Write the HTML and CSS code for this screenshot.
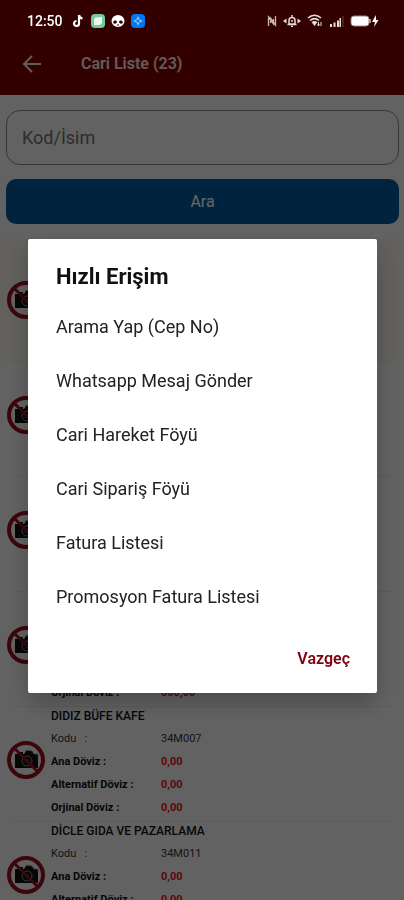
FILE: index.html
```html
<!DOCTYPE html>
<html lang="tr">
<head>
<meta charset="UTF-8">
<meta name="viewport" content="width=device-width, initial-scale=1">
<title>Cari Liste</title>
<link rel="stylesheet" href="styles.css">
</head>
<body>
    <svg class="symbols" aria-hidden="true">
        <symbol id="no-photo" viewBox="0 0 40 40">
            <path d="M9 14h5v-2h3v2h1l2-3h6l2 3h4v14H9z" fill="#111"/>
            <circle cx="21" cy="21" r="5" fill="none" stroke="#888" stroke-width="1"/>
            <circle cx="21" cy="21" r="2" fill="#555"/>
            <path d="M19 11l3-1 4 1 2 3h4v3" fill="none" stroke="#999" stroke-width="1"/>
            <path d="M8 8l24 24" stroke="#8c1020" stroke-width="3"/>
            <circle cx="20" cy="20" r="17" fill="none" stroke="#960f1c" stroke-width="4"/>
        </symbol>
    </svg>

    <div class="status-bar">
        <span class="clock">12:50</span>
        <div class="status-apps">
            <svg width="14" height="14" viewBox="0 0 14 14"><path d="M8 1v8.500a2.500 2.500 0 1 1-2.500-2.500M8 1c.3 2 1.500 3.200 3.500 3.400" fill="none" stroke="#fff" stroke-width="2.200"/></svg>
            <svg width="14" height="14" viewBox="0 0 14 14"><rect width="14" height="14" rx="4" fill="#76c9a0"/><path d="M3 5l1.500-1.500L11 3v6L9 11H3z" fill="#e8f8ee"/></svg>
            <svg width="14" height="14" viewBox="0 0 14 14"><ellipse cx="7" cy="7" rx="6.500" ry="6" fill="#fff"/><path d="M2.200 8c0-1.500 3-2.200 3.600-1 .5 1.500-.6 2.700-2 2.700C2.800 9.700 2.200 9 2.200 8zM11.800 8c0-1.500-3-2.200-3.600-1-.5 1.500.6 2.700 2 2.700 1 0 1.600-.7 1.600-1.700z" fill="#300"/><path d="M6 11h2" stroke="#300"/></svg>
            <svg width="14" height="14" viewBox="0 0 14 14"><rect width="14" height="14" rx="4" fill="#0874ee"/><path d="M7 2l1.500 3.500L12 7 8.500 8.500 7 12 5.500 8.500 2 7l3.500-1.500z" fill="#8fd0ff"/><path d="M7 5l2 2-2 2-2-2z" fill="#0874ee"/></svg>
        </div>
        <div class="status-system">
            <svg width="10" height="12" viewBox="0 0 10 12"><path d="M1.500 11V2l5 7V4M8.500 1v9l-5-7v5" fill="none" stroke="#c8b4b0" stroke-width="1.300"/></svg>
            <svg width="18" height="12" viewBox="0 0 18 12"><path d="M6 9V5.500a3 3 0 0 1 6 0V9zM4.500 9.500h9M9 0v2M8 11.500h2" fill="none" stroke="#e8dcd8" stroke-width="1.500"/><path d="M3.500 3.500L0 6l3.500 2.500zM14.500 3.500L18 6l-3.500 2.500z" fill="#e8dcd8"/><circle cx="9" cy="6" r="1" fill="#e8dcd8"/></svg>
            <svg width="16" height="13" viewBox="0 0 16 13"><path d="M1 4c4-3.600 9-3.600 13 0M3 6.500c3-2.600 6-2.600 9 0" fill="none" stroke="#e8dcd8" stroke-width="1.600"/><path d="M4.500 8c2-1.500 4-1.500 6 0l-3 4z" fill="#e8dcd8"/><path d="M11.500 12V8m-1 2.500l1 1.500 1-1.500M14 8v4" fill="none" stroke="#e8dcd8"/></svg>
            <svg width="15" height="12" viewBox="0 0 15 12"><path d="M1 9h2v3H1zM4.500 7.500h2V12h-2zM8 5.500h2V12H8z" fill="#e8dcd8"/><path d="M10.500 3H12v9h-1.500z" fill="#e8dcd8"/><path d="M14 1v11" stroke="#603c3c"/></svg>
            <svg width="29" height="12" viewBox="0 0 29 12"><rect x="1" y="1" width="18" height="10" rx="3" fill="#fff" stroke="#9c8583"/><path d="M20 4v4" stroke="#c8b8b5" stroke-width="1.500"/><path d="M26 0l-4 7h3l-1 5 4.500-7H26z" fill="#fff"/></svg>
        </div>
    </div>

    <div class="app">
        <header class="app-header">
            <a href="#" class="back" aria-label="Geri">
                <svg width="20" height="18" viewBox="0 0 20 18"><path d="M19 9H2M10 1L2 9l8 8" fill="none" stroke="currentColor" stroke-width="2"/></svg>
            </a>
            <h1>Cari Liste (23)</h1>
        </header>

        <form class="search">
            <input type="text" placeholder="Kod/İsim" aria-label="Kod/İsim">
            <button type="button">Ara</button>
        </form>

        <ul class="customers">
            <li class="customer selected"><svg class="photo"><use href="#no-photo"/></svg></li>
            <li class="customer"><svg class="photo"><use href="#no-photo"/></svg></li>
            <li class="customer"><svg class="photo"><use href="#no-photo"/></svg></li>
            <li class="customer">
                <svg class="photo"><use href="#no-photo"/></svg>
                <div class="info">
                    <dl>
                        <dt>Orjinal Döviz :</dt><dd>000,00</dd>
                    </dl>
                </div>
            </li>
            <li class="customer">
                <svg class="photo"><use href="#no-photo"/></svg>
                <div class="info">
                    <h2>DIDIZ BÜFE KAFE</h2>
                    <dl>
                        <dt class="code">Kodu &nbsp; :</dt><dd class="code">34M007</dd>
                        <dt>Ana Döviz :</dt><dd>0,00</dd>
                        <dt>Alternatif Döviz :</dt><dd>0,00</dd>
                        <dt>Orjinal Döviz :</dt><dd>0,00</dd>
                    </dl>
                </div>
            </li>
            <li class="customer">
                <svg class="photo"><use href="#no-photo"/></svg>
                <div class="info">
                    <h2>DİCLE GIDA VE PAZARLAMA</h2>
                    <dl>
                        <dt class="code">Kodu &nbsp; :</dt><dd class="code">34M011</dd>
                        <dt>Ana Döviz :</dt><dd>0,00</dd>
                        <dt>Alternatif Döviz :</dt><dd>0,00</dd>
                    </dl>
                </div>
            </li>
        </ul>
    </div>

    <div class="scrim">
        <div class="dialog" role="dialog" aria-labelledby="dialog-title">
            <h2 id="dialog-title">Hızlı Erişim</h2>
            <div class="dialog-options">
                <button type="button">Arama Yap (Cep No)</button>
                <button type="button">Whatsapp Mesaj Gönder</button>
                <button type="button">Cari Hareket Föyü</button>
                <button type="button">Cari Sipariş Föyü</button>
                <button type="button">Fatura Listesi</button>
                <button type="button">Promosyon Fatura Listesi</button>
            </div>
            <div class="dialog-actions">
                <button type="button">Vazgeç</button>
            </div>
        </div>
    </div>
</body>
</html>
```

FILE: styles.css
```css
* {
    box-sizing: border-box;
}

body {
    font-family: Roboto, "Liberation Sans", sans-serif;
    margin: 0;
    color: #111;
    background-color: #f6f6f6;
}

h1, h2, ul, dl, dd {
    margin: 0;
    padding: 0;
}

button, input {
    font-family: inherit;
}

.symbols {
    position: absolute;
    width: 0;
    height: 0;
}

/* status bar stays bright above the scrim */
.status-bar {
    position: fixed;
    top: 0;
    left: 0;
    right: 0;
    z-index: 3;
    display: flex;
    align-items: center;
    height: 41px;
    padding: 0 25px 0 27px;
    color: #fff;
}

.clock {
    font-size: 14px;
    font-weight: 500;
}

.status-apps {
    display: flex;
    gap: 6px;
    margin-left: 8px;
}

.status-system {
    display: flex;
    align-items: center;
    gap: 6px;
    margin-left: auto;
}

.app {
    height: 100vh;
    overflow: hidden;
}

.app-header {
    display: flex;
    align-items: center;
    gap: 39px;
    padding: 40px 22px 8px;
    height: 95px;
    background-color: #800000;
    color: #fff;
}

.app-header h1 {
    font-size: 16px;
    font-weight: 600;
}

.back {
    display: flex;
    color: #fff;
}

.app-header h1, .back {
    opacity: 0.9;
}

.search {
    display: flex;
    flex-direction: column;
    gap: 14px;
    padding: 15px 5px 14px 6px;
}

.search input {
    height: 55px;
    padding: 0 15px;
    border: 1px solid #888;
    border-radius: 14px;
    background: none;
    font-size: 18px;
}

.search input::placeholder {
    color: #707070;
    opacity: 1;
}

.search button {
    height: 45px;
    border: none;
    border-radius: 10px;
    background-color: #005a9d;
    color: #fff;
    font-size: 16px;
}

.customers {
    list-style: none;
}

.customer {
    display: flex;
    gap: 5px;
    height: 115px;
    padding: 0 10px 0 6px;
}

.customer.selected {
    height: 124px;
    padding-top: 9px;
    background-color: #f6f3ea;
}

.customer:not(:last-child) {
    background-image: linear-gradient(#e9e9e9, #e9e9e9);
    background-size: calc(100% - 24px) 1px;
    background-position: center bottom;
    background-repeat: no-repeat;
}

.photo {
    flex: none;
    width: 40px;
    height: 40px;
    margin-top: 33px;
}

.info {
    flex: 1;
    display: flex;
    flex-direction: column;
    justify-content: flex-end;
    padding-bottom: 3px;
}

.customer:last-child .info {
    justify-content: flex-start;
}

.info h2 {
    margin-bottom: 2px;
    font-size: 12px;
    font-weight: 500;
    line-height: 18px;
}

.info dl {
    display: grid;
    grid-template-columns: 110px 1fr;
    font-size: 11px;
    font-weight: 700;
    line-height: 23px;
}

.info dd {
    color: #e8101c;
}

.info .code {
    color: #333;
    font-weight: 400;
}

.scrim {
    position: fixed;
    inset: 0;
    z-index: 2;
    display: flex;
    align-items: center;
    justify-content: center;
    padding: 32px 27px 0 28px;
    background-color: rgba(0, 0, 0, 0.6);
}

.dialog {
    width: 100%;
    padding: 25px 27px 17px 28px;
    border-radius: 2px;
    background-color: #fff;
    box-shadow: 0 10px 24px rgba(0, 0, 0, 0.25);
}

.dialog h2 {
    font-size: 22px;
    font-weight: 700;
    line-height: 26px;
    margin-bottom: 9px;
}

.dialog button {
    padding: 0;
    border: none;
    background: none;
    text-align: left;
    cursor: pointer;
}

.dialog-options {
    display: flex;
    flex-direction: column;
}

.dialog-options button {
    height: 54px;
    color: #222;
    font-size: 18px;
}

.dialog-actions {
    display: flex;
    justify-content: flex-end;
    margin-top: 18px;
}

.dialog-actions button {
    height: 35px;
    color: #800010;
    font-size: 16px;
    font-weight: 600;
}
```
